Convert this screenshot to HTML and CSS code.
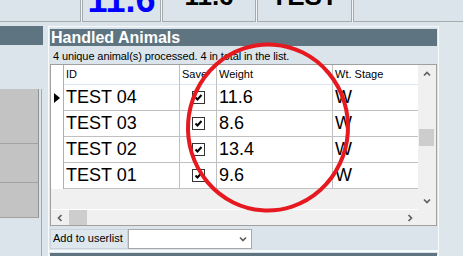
FILE: index.html
```html
<!DOCTYPE html>
<html lang="en">
<head>
  <meta charset="UTF-8">
  <title>Handled Animals</title>
  <link rel="stylesheet" href="styles.css">
</head>
<body>

  <div class="topbar">
    <div class="tile tile-blank"></div>
    <div class="tile tile-live"><span class="live-weight">11.6</span></div>
    <div class="tile tile-last"><span class="tile-value">11.6</span></div>
    <div class="tile tile-id"><span class="tile-value">TEST</span></div>
    <div class="tile tile-fill"></div>
  </div>

  <div class="workspace">
    <aside class="side">
      <div class="side-head"></div>
      <div class="side-list">
        <div class="side-btn side-btn-tall"></div>
        <div class="side-btn"></div>
        <div class="side-btn side-btn-short"></div>
      </div>
    </aside>

    <main class="center">
      <section class="panel">
        <div class="panel-head">Handled Animals</div>
        <div class="panel-info">4 unique animal(s) processed. 4 in total in the list.</div>

        <div class="grid">
          <div class="grid-view">
            <div class="grid-row grid-header">
              <div class="cell row-head"></div>
              <div class="cell">ID</div>
              <div class="cell">Save</div>
              <div class="cell">Weight</div>
              <div class="cell cell-end">Wt. Stage</div>
            </div>
            <div class="grid-row">
              <div class="cell row-head"><span class="caret"></span></div>
              <div class="cell">TEST 04</div>
              <div class="cell cell-check"><span class="check"><svg viewBox="0 0 11 11"><path d="M2.5 5.5 L4.5 7.5 L8.5 3"/></svg></span></div>
              <div class="cell">11.6</div>
              <div class="cell cell-end">W</div>
            </div>
            <div class="grid-row">
              <div class="cell row-head"></div>
              <div class="cell">TEST 03</div>
              <div class="cell cell-check"><span class="check"><svg viewBox="0 0 11 11"><path d="M2.5 5.5 L4.5 7.5 L8.5 3"/></svg></span></div>
              <div class="cell">8.6</div>
              <div class="cell cell-end">W</div>
            </div>
            <div class="grid-row">
              <div class="cell row-head"></div>
              <div class="cell">TEST 02</div>
              <div class="cell cell-check"><span class="check"><svg viewBox="0 0 11 11"><path d="M2.5 5.5 L4.5 7.5 L8.5 3"/></svg></span></div>
              <div class="cell">13.4</div>
              <div class="cell cell-end">W</div>
            </div>
            <div class="grid-row">
              <div class="cell row-head"></div>
              <div class="cell">TEST 01</div>
              <div class="cell cell-check"><span class="check"><svg viewBox="0 0 11 11"><path d="M2.5 5.5 L4.5 7.5 L8.5 3"/></svg></span></div>
              <div class="cell">9.6</div>
              <div class="cell cell-end">W</div>
            </div>
          </div>

          <div class="vscroll">
            <div class="sb-btn"><svg viewBox="0 0 8 8"><path d="M1 5.5 L4 2.5 L7 5.5"/></svg></div>
            <div class="sb-track"><div class="thumb-v"></div></div>
            <div class="sb-btn"><svg viewBox="0 0 8 8"><path d="M1 2.5 L4 5.5 L7 2.5"/></svg></div>
          </div>

          <div class="hscroll">
            <div class="sb-btn sb-btn-h"><svg viewBox="0 0 8 8"><path d="M5.5 1 L2.5 4 L5.5 7"/></svg></div>
            <div class="thumb-h"></div>
            <div class="sb-track"></div>
            <div class="sb-btn sb-btn-h"><svg viewBox="0 0 8 8"><path d="M2.5 1 L5.5 4 L2.5 7"/></svg></div>
          </div>

          <div class="corner"></div>
        </div>

        <div class="userlist">
          <div class="userlist-label">Add to userlist</div>
          <div class="combo"><svg viewBox="0 0 8 8"><path d="M1 2.5 L4 5.5 L7 2.5"/></svg></div>
        </div>
      </section>

      <section class="panel panel-next">
        <div class="panel-head"></div>
      </section>
    </main>

    <div class="right-rail"></div>
  </div>

  <!-- red marker drawn over the screenshot -->
  <svg class="annotation" viewBox="0 0 463 256">
    <ellipse cx="268" cy="127.5" rx="80" ry="83" transform="rotate(4 268 127.5)"/>
  </svg>

</body>
</html>
```

FILE: styles.css
```css
    :root {
      --bg: #dbe4ea;
      --head: #5e7480;
      --grid-line: #c0c0c0;
      --scroll: #f0f0f0;
    }

    html, body {
      margin: 0;
      padding: 0;
      height: 100%;
      overflow: hidden;
    }

    body {
      position: relative;
      background: var(--bg);
      font-family: "Liberation Sans", Arial, sans-serif;
      font-size: 11px;
      color: #000;
    }

    /* Value tiles along the top */
    .topbar {
      display: flex;
      gap: 1px;
      height: 22px;
      background: #f2f6f8;
    }

    .tile {
      box-sizing: border-box;
      height: 22px;
      background: var(--bg);
      border: 1px solid #a5acb0;
      border-top: none;
      overflow: hidden;
      text-align: center;
    }

    .tile-blank { width: 81px; border-left: none; }
    .tile-live { width: 79px; }
    .tile-last { width: 94px; }
    .tile-id { width: 95px; }
    .tile-fill { flex: 1; border-right: none; }

    .live-weight {
      display: block;
      margin-top: -18px;
      font-size: 36px;
      line-height: 36px;
      font-weight: bold;
      color: #0000ff;
    }

    .tile-value {
      display: block;
      margin-top: -17px;
      font-size: 26px;
      line-height: 26px;
      font-weight: bold;
    }

    .workspace {
      display: flex;
      height: calc(100% - 22px);
      overflow: hidden;
    }

    /* Left column */
    .side {
      width: 48px;
      display: flex;
      flex-direction: column;
    }

    .side-head {
      margin-top: 4px;
      width: 43px;
      height: 19px;
      background: var(--head);
    }

    .side-list {
      flex: 1;
      margin-top: 44px;
      width: 41px;
      border-right: 1px solid #a3aaae;
    }

    .side-btn {
      box-sizing: border-box;
      width: 39px;
      height: 39px;
      background: #c3c3c3;
      border-right: 1px solid #8e9396;
      border-bottom: 1px solid #a2a2a2;
    }

    .side-btn-tall { height: 55px; }
    .side-btn-short { height: 35px; }

    /* Middle panels */
    .center {
      width: 391px;
      display: flex;
      flex-direction: column;
      overflow: hidden;
    }

    .panel {
      margin-top: 4px;
      padding: 2px 1px 1px;
      border: 1px solid #f7fafb;
    }

    .panel-head {
      height: 17px;
      line-height: 17px;
      padding-left: 1px;
      background: var(--head);
      color: #fff;
      font-size: 16px;
      font-weight: bold;
    }

    .panel-info {
      box-sizing: border-box;
      height: 18px;
      padding: 2px 0 0 3px;
      line-height: 16px;
      letter-spacing: -0.1px;
      white-space: nowrap;
    }

    .panel-next {
      margin-top: 0;
      padding: 1px 1px 0;
      flex: 1;
      min-height: 0;
    }

    /* Data grid */
    .grid {
      display: grid;
      grid-template-columns: 367px 18px;
      grid-template-rows: 144px 16px;
      border: 1px solid #a0a0a0;
      background: var(--scroll);
    }

    .grid-view {
      overflow: hidden;
      background: var(--scroll);
    }

    .grid-row {
      display: grid;
      grid-template-columns: 13px 116px 37px 116px 85px;
      height: 26px;
    }

    .grid-header {
      height: 20px;
    }

    .cell {
      box-sizing: border-box;
      padding-left: 2px;
      background: #fff;
      border-right: 1px solid var(--grid-line);
      border-bottom: 1px solid var(--grid-line);
      font-size: 18px;
      line-height: 25px;
      white-space: nowrap;
      overflow: hidden;
    }

    .grid-header .cell {
      font-size: 11px;
      line-height: 19px;
      border-bottom-color: #dbe6f4;
    }

    .grid-row .row-head {
      padding: 0;
      border-bottom: none;
      border-right-color: #b0b0b0;
    }

    .cell-end {
      border-right: none;
    }

    .caret {
      display: block;
      width: 0;
      height: 0;
      margin: 8px 0 0 3px;
      border-left: 6px solid #000;
      border-top: 5px solid transparent;
      border-bottom: 5px solid transparent;
    }

    .cell-check {
      padding: 0;
    }

    .check {
      display: block;
      box-sizing: border-box;
      width: 13px;
      height: 13px;
      margin: 6px auto 0;
      border: 1px solid #333;
      background: #fff;
    }

    .check svg {
      display: block;
      width: 11px;
      height: 11px;
      fill: none;
      stroke: #000;
      stroke-width: 2;
    }

    /* Scrollbars */
    .vscroll {
      display: flex;
      flex-direction: column;
      background: var(--scroll);
    }

    .sb-btn {
      height: 17px;
      display: flex;
      align-items: center;
      justify-content: center;
      flex-shrink: 0;
    }

    .sb-btn svg,
    .combo svg {
      width: 8px;
      height: 8px;
      fill: none;
      stroke: #606060;
      stroke-width: 1.7;
    }

    .sb-track {
      flex: 1;
    }

    .thumb-v {
      margin: 47px 0 0 1px;
      width: 15px;
      height: 17px;
      background: #cdcdcd;
    }

    .hscroll {
      display: flex;
      box-sizing: border-box;
      height: 16px;
      border-top: 1px solid #fff;
      background: var(--scroll);
    }

    .sb-btn-h {
      width: 17px;
      height: 15px;
    }

    .thumb-h {
      margin-left: 1px;
      width: 18px;
      height: 15px;
      background: #cdcdcd;
    }

    .corner {
      background: var(--scroll);
    }

    /* Userlist picker */
    .userlist {
      display: flex;
      height: 20px;
      margin-top: 3px;
    }

    .userlist-label {
      box-sizing: border-box;
      width: 78px;
      padding-left: 2px;
      line-height: 16px;
      background: #dde7ed;
      border: 1px solid #c9d3d9;
      white-space: nowrap;
    }

    .combo {
      box-sizing: border-box;
      width: 124px;
      padding-right: 4px;
      display: flex;
      align-items: center;
      justify-content: flex-end;
      background: #fff;
      border: 1px solid #a9a9a9;
    }

    .right-rail {
      flex: 1;
      background: #dde6eb;
    }

    .annotation {
      position: absolute;
      left: 0;
      top: 0;
      width: 463px;
      height: 256px;
      pointer-events: none;
    }

    .annotation ellipse {
      fill: none;
      stroke: #e5191f;
      stroke-width: 4;
    }
```
